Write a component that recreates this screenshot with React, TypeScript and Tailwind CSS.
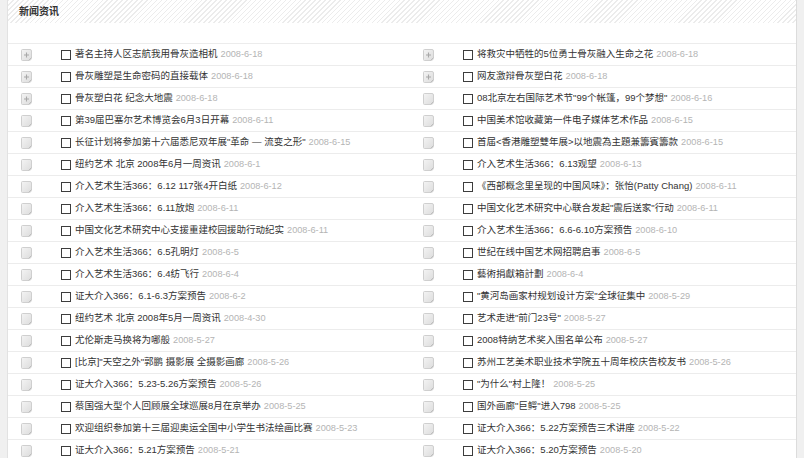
import React from "react";

type Item = { t: string; d: string; plus?: boolean };

const left: Item[] = [
  { t: "著名主持人区志航我用骨灰造相机", d: "2008-6-18", plus: true },
  { t: "骨灰雕塑是生命密码的直接载体", d: "2008-6-18", plus: true },
  { t: "骨灰塑白花 纪念大地震", d: "2008-6-18", plus: true },
  { t: "第39届巴塞尔艺术博览会6月3日开幕", d: "2008-6-11" },
  { t: "长征计划将参加第十六届悉尼双年展\"革命 — 流变之形\"", d: "2008-6-15" },
  { t: "纽约艺术 北京 2008年6月一周资讯", d: "2008-6-1" },
  { t: "介入艺术生活366：6.12 117张4开白纸", d: "2008-6-12" },
  { t: "介入艺术生活366：6.11放炮", d: "2008-6-11" },
  { t: "中国文化艺术研究中心支援重建校园援助行动纪实", d: "2008-6-11" },
  { t: "介入艺术生活366：6.5孔明灯", d: "2008-6-5" },
  { t: "介入艺术生活366：6.4纺飞行", d: "2008-6-4" },
  { t: "证大介入366：6.1-6.3方案预告", d: "2008-6-2" },
  { t: "纽约艺术 北京 2008年5月一周资讯", d: "2008-4-30" },
  { t: "尤伦斯走马换将为哪般", d: "2008-5-27" },
  { t: "[比京]\"天空之外\"郭鹏 摄影展 全摄影画廊", d: "2008-5-26" },
  { t: "证大介入366：5.23-5.26方案预告", d: "2008-5-26" },
  { t: "蔡国强大型个人回顾展全球巡展8月在京举办", d: "2008-5-25" },
  { t: "欢迎组织参加第十三届迎奥运全国中小学生书法绘画比赛", d: "2008-5-23" },
  { t: "证大介入366：5.21方案预告", d: "2008-5-21" },
];

const right: Item[] = [
  { t: "将救灾中牺牲的5位勇士骨灰融入生命之花", d: "2008-6-18", plus: true },
  { t: "网友激辩骨灰塑白花", d: "2008-6-18", plus: true },
  { t: "08北京左右国际艺术节\"99个帐篷，99个梦想\"", d: "2008-6-16" },
  { t: "中国美术馆收藏第一件电子媒体艺术作品", d: "2008-6-15" },
  { t: "首届<香港雕塑雙年展>以地震為主題兼籌賓籌款", d: "2008-6-15" },
  { t: "介入艺术生活366：6.13观望", d: "2008-6-13" },
  { t: "《西部概念里呈现的中国风味》：张怡(Patty Chang)", d: "2008-6-11" },
  { t: "中国文化艺术研究中心联合发起\"震后送家\"行动", d: "2008-6-11" },
  { t: "介入艺术生活366：6.6-6.10方案预告", d: "2008-6-10" },
  { t: "世纪在线中国艺术网招聘启事", d: "2008-6-5" },
  { t: "藝術捐獻箱計劃", d: "2008-6-4" },
  { t: "\"黄河岛画家村规划设计方案\"全球征集中", d: "2008-5-29" },
  { t: "艺术走进\"前门23号\"", d: "2008-5-27" },
  { t: "2008特纳艺术奖入围名单公布", d: "2008-5-27" },
  { t: "苏州工艺美术职业技术学院五十周年校庆告校友书", d: "2008-5-26" },
  { t: "\"为什么\"村上隆！", d: "2008-5-25" },
  { t: "国外画廊\"巨鳄\"进入798", d: "2008-5-25" },
  { t: "证大介入366：5.22方案预告三术讲座", d: "2008-5-22" },
  { t: "证大介入366：5.20方案预告", d: "2008-5-20" },
];

function DocIcon({ plus }: { plus?: boolean }) {
  return (
    <svg width="11" height="12" viewBox="0 0 11 12" className="shrink-0">
      <defs>
        <linearGradient id="dg" x1="0" y1="0" x2="1" y2="1">
          <stop offset="0" stopColor="#f4f4f4" />
          <stop offset="1" stopColor="#dcdcdc" />
        </linearGradient>
      </defs>
      <path
        d="M1.5 0.5 H9 Q10.5 0.5 10.5 2 V8.5 Q10.5 11.5 7.5 11.5 H1.5 Q0.5 11.5 0.5 10.5 V1.5 Q0.5 0.5 1.5 0.5 Z"
        fill="url(#dg)"
        stroke="#cfcfcf"
        strokeWidth="1"
      />
      <path d="M7.5 11.5 Q9 10 10.5 8.5" fill="none" stroke="#bdbdbd" strokeWidth="1" />
      {plus && (
        <path d="M5.5 3.5 V8.5 M3 6 H8" stroke="#a8a8a8" strokeWidth="1.1" />
      )}
    </svg>
  );
}

function Cell({ item }: { item: Item }) {
  return (
    <div className="flex items-center h-full pl-[13px]">
      <DocIcon plus={item.plus} />
      <span className="ml-[29px] w-[10px] h-[10px] border border-[#3d3d3d] bg-white shrink-0" />
      <span className="ml-[4px] whitespace-nowrap text-[#333] text-[9.5px] leading-none">
        {item.t}
        <span className="ml-[3px] text-[#b4b4b4] text-[9.2px]">{item.d}</span>
      </span>
    </div>
  );
}

export default function App() {
  return (
    <div
      className="w-[804px] h-[458px] overflow-hidden bg-white flex"
      style={{ fontFamily: '"Liberation Sans", "Noto Sans CJK SC", sans-serif' }}
    >
      <div className="w-[8px] shrink-0 bg-[#f0f0f0] border-r border-[#e2e2e2]" />
      <div className="flex-1 flex flex-col min-w-0">
        <div className="h-[23px] shrink-0 flex items-center pl-[11px] bg-[repeating-linear-gradient(135deg,#ececec_0px,#ececec_1px,#ffffff_1px,#ffffff_3.5px)]">
          <span className="text-[10px] font-bold text-[#333] leading-none">新闻资讯</span>
        </div>
        <div className="h-[20px] shrink-0" />
        <div className="border-t border-[#ececec]">
          {left.map((l, i) => (
            <div
              key={i}
              className="grid grid-cols-[402px_1fr] h-[22px] border-b border-[#ececec]"
            >
              <Cell item={l} />
              <Cell item={right[i]} />
            </div>
          ))}
        </div>
      </div>
      <div className="w-[8px] shrink-0 bg-[#f0f0f0] border-l border-[#dcdcdc]" />
    </div>
  );
}
